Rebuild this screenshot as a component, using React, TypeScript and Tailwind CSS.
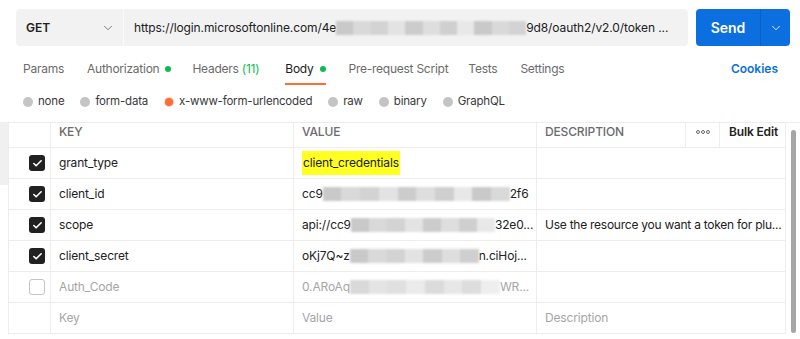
import { Check, ChevronDown } from "lucide-react";

type Row = {
  checked: boolean;
  disabled?: boolean;
  keyName: string;
  value: React.ReactNode;
  description?: string;
};

const shades = ["#d9d9d9", "#cfcfcf", "#e3e3e3", "#c9c9c9", "#dedede", "#d3d3d3", "#e8e8e8", "#cccccc"];

function Redacted({ width, light = false }: { width: number; light?: boolean }) {
  const parts = Math.max(3, Math.round(width / 18));
  return (
    <span
      className={`inline-flex h-[14px] shrink-0 overflow-hidden blur-[1px] align-middle ${light ? "opacity-70" : ""}`}
      style={{ width }}
    >
      {Array.from({ length: parts }).map((_, i) => (
        <span key={i} className="flex-1" style={{ background: shades[(i * 5 + 3) % shades.length] }} />
      ))}
    </span>
  );
}

const rows: Row[] = [
  {
    checked: true,
    keyName: "grant_type",
    value: <span className="bg-[#ffff22] py-[3px] px-[1px]">client_credentials</span>,
  },
  {
    checked: true,
    keyName: "client_id",
    value: (
      <>
        cc9
        <Redacted width={187} />
        2f6
      </>
    ),
  },
  {
    checked: true,
    keyName: "scope",
    value: (
      <>
        api://cc9
        <Redacted width={144} />
        32e0...
      </>
    ),
    description: "Use the resource you want a token for plu...",
  },
  {
    checked: true,
    keyName: "client_secret",
    value: (
      <>
        oKj7Q~z
        <Redacted width={129} />
        n.ciHoj...
      </>
    ),
  },
  {
    checked: false,
    disabled: true,
    keyName: "Auth_Code",
    value: (
      <>
        0.ARoAq
        <Redacted width={150} light />
        WR...
      </>
    ),
  },
];

const radios = ["none", "form-data", "x-www-form-urlencoded", "raw", "binary", "GraphQL"];

function Dot() {
  return <span className="ml-[6px] inline-block h-[6px] w-[6px] rounded-full bg-[#0cbb52]" />;
}

function Tab({ children, active = false, className = "" }: { children: React.ReactNode; active?: boolean; className?: string }) {
  return (
    <div
      className={`flex h-[39px] shrink-0 items-start pt-[15px] leading-[16px] ${
        active ? "border-b-2 border-[#ff6c37] text-[#212121]" : ""
      } ${className}`}
    >
      <span className="inline-flex items-center">{children}</span>
    </div>
  );
}

export default function App() {
  return (
    <div
      className="h-[339px] w-[800px] overflow-hidden bg-white text-[12px] text-[#212121]"
      style={{ fontFamily: "Inter, 'Noto Sans', sans-serif" }}
    >
      {/* request bar */}
      <div className="flex gap-2 pl-4 pr-[10px] pt-[9px]">
        <div className="flex h-[37px] flex-1 rounded-[4px] bg-[#f2f2f2]">
          <div className="flex w-[108px] items-center justify-between border-r border-[#fafafa] pl-[10px] pr-[8px]">
            <span className="font-semibold">GET</span>
            <ChevronDown size={14} strokeWidth={1.5} className="text-[#6b6b6b]" />
          </div>
          <div className="flex flex-1 items-center whitespace-nowrap pl-[10px] tracking-[-0.1px]">
            https://login.microsoftonline.com/4e
            <Redacted width={190} />
            9d8/oauth2/v2.0/token ...
          </div>
        </div>
        <div className="flex h-[37px] w-[94px] rounded-[4px] bg-[#0c6fe0] text-white">
          <div className="flex flex-1 items-center justify-center text-[14px] font-semibold">Send</div>
          <div className="flex w-[30px] items-center justify-center border-l border-[#0b60c4]">
            <ChevronDown size={14} strokeWidth={1.5} />
          </div>
        </div>
      </div>

      {/* tabs */}
      <div className="flex h-[40px] items-start pl-[23px] pr-[22px] tracking-[-0.25px] text-[#6b6b6b]">
        <Tab>Params</Tab>
        <Tab className="ml-[23px]">
          Authorization
          <Dot />
        </Tab>
        <Tab className="ml-[21px]">
          Headers&nbsp;<span className="text-[#0cbb52]">(11)</span>
        </Tab>
        <Tab active className="ml-[26px]">
          Body
          <Dot />
        </Tab>
        <Tab className="ml-[23px]">Pre-request Script</Tab>
        <Tab className="ml-[20px]">Tests</Tab>
        <Tab className="ml-[23px]">Settings</Tab>
        <span className="ml-auto pt-[15px] font-semibold leading-[16px] tracking-normal text-[#0c6fe0]">Cookies</span>
      </div>

      {/* body type */}
      <div className="flex h-[32px] items-center gap-[16px] pl-[23px] text-[11.5px] tracking-[-0.2px]">
        {radios.map((r) => {
          const active = r === "x-www-form-urlencoded";
          return (
            <span key={r} className="flex items-center gap-[5px]">
              {active ? (
                <span className="flex h-[10px] w-[10px] items-center justify-center rounded-full bg-[#fbd3c4]">
                  <span className="h-[8px] w-[8px] rounded-full bg-[#ff6c37]" />
                </span>
              ) : (
                <span className="h-[10px] w-[10px] rounded-full bg-[#c4c4c4]" />
              )}
              <span className="text-[#3a3a3a]">{r}</span>
            </span>
          );
        })}
      </div>

      {/* table */}
      <div className="mt-[4px] flex border-t border-[#ededed] tracking-[-0.15px]">
        <div className="w-[8px] shrink-0">
          <div className="h-[62px] bg-[#f0f0f0]" />
        </div>
        <div className="w-[777px] shrink-0 border-l border-[#ededed]">
          <div className="flex h-[25px] border-b border-[#ededed] font-medium text-[#6b6b6b]">
            <div className="w-[42px] shrink-0 border-r border-[#ededed]" />
            <div className="flex w-[243px] shrink-0 items-center border-r border-[#ededed] pb-[6px] pl-[8px]">KEY</div>
            <div className="flex w-[243px] shrink-0 items-center border-r border-[#ededed] pb-[6px] pl-[8px]">VALUE</div>
            <div className="flex w-[149px] shrink-0 items-center border-r border-[#ededed] pb-[6px] pl-[8px]">DESCRIPTION</div>
            <div className="flex w-[34px] shrink-0 items-center justify-center gap-[1px] border-r border-[#ededed] pb-[6px]">
              {[0, 1, 2].map((i) => (
                <span key={i} className="h-[4px] w-[4px] rounded-full border border-[#6b6b6b]" />
              ))}
            </div>
            <div className="flex flex-1 items-center pb-[6px] pl-[9px] font-semibold text-[#212121]">Bulk Edit</div>
          </div>
          {rows.map((row) => (
            <div key={row.keyName} className="flex h-[31px] border-b border-[#ededed]">
              <div className="flex w-[42px] shrink-0 items-center justify-end border-r border-[#ededed] pr-[5px]">
                {row.checked ? (
                  <span className="flex h-[16px] w-[16px] items-center justify-center rounded-[3px] bg-[#212121]">
                    <Check size={11} strokeWidth={3.5} className="text-white" />
                  </span>
                ) : (
                  <span className="h-[16px] w-[16px] rounded-[3px] border border-[#c4c4c4] bg-white" />
                )}
              </div>
              <div
                className={`flex w-[243px] shrink-0 items-center border-r border-[#ededed] pl-[8px] ${
                  row.disabled ? "text-[#a6a6a6]" : ""
                }`}
              >
                {row.keyName}
              </div>
              <div
                className={`flex w-[243px] shrink-0 items-center overflow-hidden whitespace-nowrap border-r border-[#ededed] pl-[8px] ${
                  row.disabled ? "text-[#a6a6a6]" : ""
                }`}
              >
                {row.value}
              </div>
              <div className="flex min-w-0 flex-1 items-center overflow-hidden whitespace-nowrap pl-[8px] tracking-[-0.25px]">
                {row.description}
              </div>
            </div>
          ))}
          <div className="flex h-[31px] border-b border-[#ededed] text-[#a6a6a6]">
            <div className="w-[42px] shrink-0 border-r border-[#ededed]" />
            <div className="flex w-[243px] shrink-0 items-center border-r border-[#ededed] pl-[8px]">Key</div>
            <div className="flex w-[243px] shrink-0 items-center border-r border-[#ededed] pl-[8px]">Value</div>
            <div className="flex flex-1 items-center pl-[8px]">Description</div>
          </div>
        </div>
        <div className="flex flex-1 justify-center border-l border-[#ededed] pt-[7px]">
          <div className="h-[203px] w-[5px] rounded-full bg-[#a6a6a6]" />
        </div>
      </div>
    </div>
  );
}
